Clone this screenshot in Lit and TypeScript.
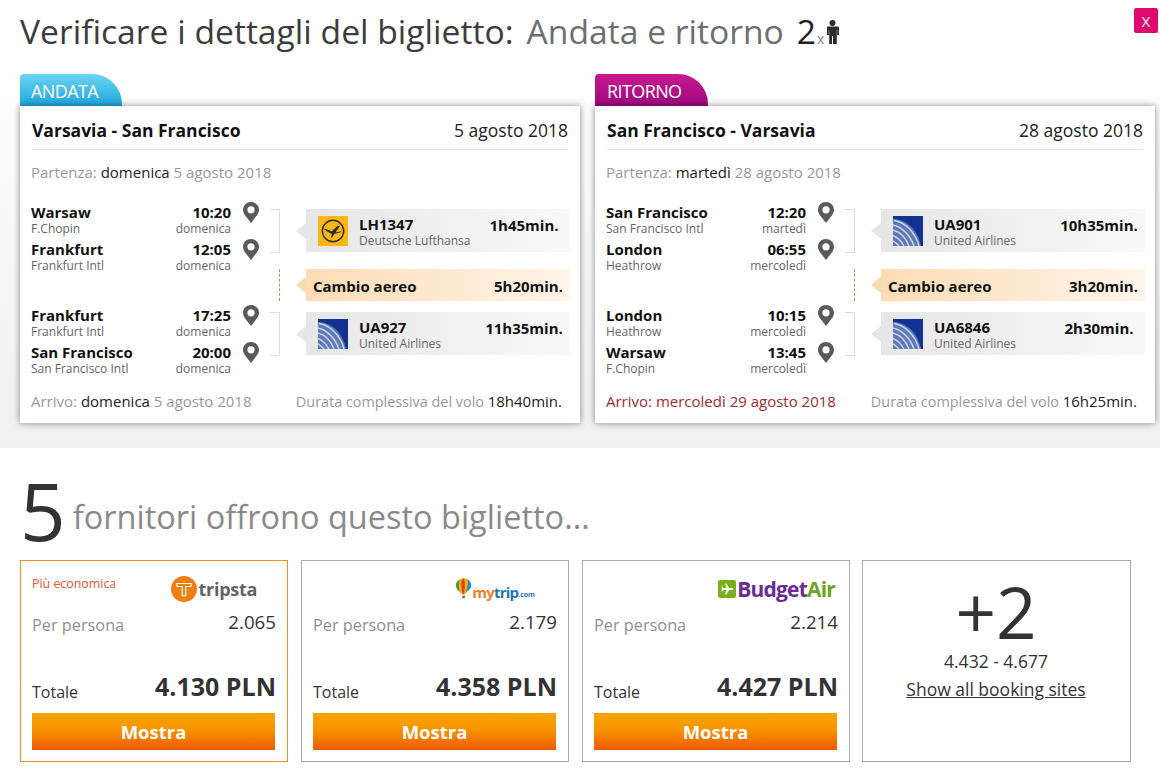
import { LitElement, html, css, svg } from "lit";
import { customElement } from "lit/decorators.js";

interface Stop { city: string; airport: string; time: string; day: string }
interface Seg { stops: Stop[]; code: string; airline: string; dur: string; logo: "lh" | "ua" }
interface Leg {
  tab: string; cls: string; route: string; date: string; depDay: string; depDate: string;
  arrDay: string; arrDate: string; arrWarn: boolean; total: string; wait: string; segs: Seg[];
}

const pin = svg`<svg class="pin" viewBox="0 0 16 21" width="16" height="21"><path fill="#5a5a5a" fill-rule="evenodd" d="M8 0C3.600 0 0 3.400 0 7.700c0 2 .7 3.300 1.600 5L8 21l6.400-8.300c.9-1.700 1.600-3 1.600-5C16 3.400 12.400 0 8 0zm0 4.200a3.600 3.600 0 1 1 0 7.200 3.600 3.600 0 0 1 0-7.200z"/></svg>`;

const lhLogo = svg`<svg class="logo" viewBox="0 0 30 30" width="30" height="30"><rect width="30" height="30" fill="#fcb714"/><circle cx="15" cy="15" r="10.700" fill="none" stroke="#2a2a33" stroke-width="1.400"/><path d="M5.500 12.500c3 .4 6 1.700 8 3l6-5.500 2.500-.3-4.500 6.800 6-1.300-.8 1-6.400 1.800-2.300 3.600-1.200-.2 1.100-3.500c-2.800-1.200-6-2.800-8.400-5.400z" fill="#2a2a33"/></svg>`;

const uaLogo = svg`<svg class="logo" viewBox="0 0 30 30" width="30" height="30"><rect width="30" height="30" fill="#13318f"/><path d="M0 3C12 3 24 12 28 30H0z" fill="#5f78b8"/><g fill="none" stroke="#c9d4ea" stroke-width="1.500"><path d="M1 4.500C11 6 22 15 26 30"/><path d="M0 9C9 11 17 19 21 30"/><path d="M0 14C7 16 13 22 16 30"/><path d="M0 19.500C4 21 8 25 11 30"/><path d="M0 25C2 26 4 28 6 30"/></g></svg>`;

const person = svg`<svg class="person" viewBox="0 0 13 24" width="13" height="24"><circle cx="6.500" cy="3" r="3" fill="#2b2b2b"/><path fill="#2b2b2b" d="M1.500 6.500h10c.8 0 1.500.6 1.500 1.400V15h-1.800v-5h-.4v14H7V16H6v8H3.200V10h-.4v5H1V7.900c0-.8 0-1.400.5-1.400z"/></svg>`;

const balloon = svg`<svg viewBox="0 0 18 24" width="16" height="22"><path d="M9 0C4 0 0 3.500 0 8c0 4 4 7 7 10h3c2-3 7-6 7-10 0-4.500-3-8-8-8z" fill="#f4b400"/><path d="M4 1.500C1 3.500 0 6 0 8c0 3 2 5 4 7 -1-4-1-9 0-13.500z" fill="#2f9e44"/><path d="M9 0C6.500 1 5.500 5 6 9c.2 3 1 6 1.500 9H9C10 13 10.500 4 9 0z" fill="#e53935"/><path d="M13 1c1 4 0 10-2 15 3-2.500 6-5 6-8 0-3-2-6-4-7z" fill="#1e88e5"/><rect x="7" y="19.500" width="3" height="3" fill="#8d6e63"/></svg>`;

const plane = svg`<svg viewBox="0 0 20 20" width="16" height="16"><path fill="#fff" d="M18 10c0-.7-.6-1.200-1.300-1.200h-4L9 3H7.500l1.900 5.800H5.200L4 7H3l.7 3L3 13h1l1.200-1.800h4.200L7.500 17H9l3.700-5.800h4c.7 0 1.300-.5 1.300-1.200z"/></svg>`;

const legs: Leg[] = [
  {
    tab: "ANDATA", cls: "out", route: "Varsavia - San Francisco", date: "5 agosto 2018",
    depDay: "domenica", depDate: "5 agosto 2018", arrDay: "domenica", arrDate: "5 agosto 2018",
    arrWarn: false, total: "18h40min.", wait: "5h20min.",
    segs: [
      { code: "LH1347", airline: "Deutsche Lufthansa", dur: "1h45min.", logo: "lh", stops: [
        { city: "Warsaw", airport: "F.Chopin", time: "10:20", day: "domenica" },
        { city: "Frankfurt", airport: "Frankfurt Intl", time: "12:05", day: "domenica" } ] },
      { code: "UA927", airline: "United Airlines", dur: "11h35min.", logo: "ua", stops: [
        { city: "Frankfurt", airport: "Frankfurt Intl", time: "17:25", day: "domenica" },
        { city: "San Francisco", airport: "San Francisco Intl", time: "20:00", day: "domenica" } ] },
    ],
  },
  {
    tab: "RITORNO", cls: "ret", route: "San Francisco - Varsavia", date: "28 agosto 2018",
    depDay: "martedì", depDate: "28 agosto 2018", arrDay: "mercoledì", arrDate: "29 agosto 2018",
    arrWarn: true, total: "16h25min.", wait: "3h20min.",
    segs: [
      { code: "UA901", airline: "United Airlines", dur: "10h35min.", logo: "ua", stops: [
        { city: "San Francisco", airport: "San Francisco Intl", time: "12:20", day: "martedì" },
        { city: "London", airport: "Heathrow", time: "06:55", day: "mercoledì" } ] },
      { code: "UA6846", airline: "United Airlines", dur: "2h30min.", logo: "ua", stops: [
        { city: "London", airport: "Heathrow", time: "10:15", day: "mercoledì" },
        { city: "Warsaw", airport: "F.Chopin", time: "13:45", day: "mercoledì" } ] },
    ],
  },
];

@customElement("app-root")
export class AppRoot extends LitElement {
  static styles = css`
    :host { display: block; position: relative; width: 1160px; height: 770px; overflow: hidden; background: #fff;
      font-family: "Open Sans", sans-serif; color: #333; }
    .top { height: 448px; box-sizing: border-box; padding: 0 5px 0 20px;
      background: linear-gradient(#fff 0, #fff 60px, #f0f0f0 100%); }
    .title { display: flex; align-items: baseline; height: 74px; padding-top: 8px; box-sizing: border-box; font-size: 33.650px; line-height: 46px; color: #3c3c3c; white-space: nowrap; }
    .title .sub { color: #6e6e6e; margin-left: 13px; }
    .title .n { color: #222; margin-left: 13px; }
    .title .x { font-size: 14px; color: #888; line-height: 14px; margin-left: 1px; }
    .person { align-self: flex-start; margin-left: 2px; margin-top: 12px; }
    .close { position: absolute; left: 1134px; top: 8px; width: 24px; height: 25px; border-radius: 2px; background: #de0a6e; color: #f9d3e4; font-size: 18px; line-height: 24px; text-align: center; }
    .legs { display: flex; gap: 15px; }
    .leg { width: 560px; }
    .tab { width: 102px; height: 32px; box-sizing: border-box; padding-left: 11px; font-size: 18px; line-height: 34px; letter-spacing: -0.6px; color: #fff; border-radius: 4px 30px 0 0; }
    .out .tab { background: linear-gradient(#6dd3f3, #1ea7de); }
    .ret .tab { width: 113px; padding-left: 12px; background: linear-gradient(#c9198f, #9c0a7c); color: #fff; }
    .card { height: 317px; box-sizing: border-box; background: #fff; box-shadow: 0 0 7px rgba(0,0,0,.45); padding: 0 12px; }
    .head { display: flex; justify-content: space-between; align-items: center; height: 44px; box-sizing: border-box; padding-top: 5px; border-bottom: 1px solid #e8e8e8; font-size: 17.500px; color: #222; }
    .head b { font-weight: 700; color: #111; }
    .dep { margin-top: 11px; font-size: 15px; line-height: 22px; color: #999; height: 44px; margin-left: -1px; }
    .dep span, .foot span { color: #222; }
    .itin { display: flex; margin-left: -1px; }
    .stops { width: 220px; flex: none; }
    .seg + .seg { margin-top: 29px; }
    .stop { display: grid; grid-template-columns: 200px 40px; height: 37px; width: 240px; }
    .stop .info { display: grid; grid-template-columns: 1fr auto; grid-auto-rows: 16px; }
    .city, .time { font-size: 15px; font-weight: 700; color: #111; line-height: 16px; margin-top: -1px; }
    .time { text-align: right; }
    .air, .day { font-size: 12px; color: #666; line-height: 16px; }
    .day { text-align: right; }
    .pin { justify-self: center; margin-top: -3px; }
    .links { margin-left: 19px; padding-top: 4px; width: 300px; flex: none; }
    .link { display: flex; height: 44px; }
    .bracket { width: 10px; height: 44px; box-sizing: border-box; border: 1px solid #ddd; border-left: none; flex: none; }
    .boxwrap { display: flex; margin-left: 16px; align-items: center; height: 43px; width: 274px; }
    .arrow { width: 0; height: 0; border: 8px solid transparent; border-left: none; border-right: 10px solid #e6e6e6; flex: none; }
    .box { width: 264px; height: 43px; box-sizing: border-box; display: flex; align-items: center; padding: 0 1px 0 12px; background: linear-gradient(90deg, #e6e6e6, #f9f9f9); }
    .logo { flex: none; margin-right: 11px; }
    .fl { flex: 1; padding-top: 3px; }
    .code { font-size: 15px; font-weight: 700; color: #111; line-height: 17px; }
    .name { font-size: 12px; color: #666; line-height: 16px; }
    .dur { width: 90px; flex: none; text-align: center; font-size: 15px; font-weight: 700; color: #111; margin-top: -11px; }
    .change { display: flex; height: 32px; margin: 16px 0 11px; }
    .dash { width: 10px; box-sizing: border-box; border-right: 1px dashed #c88a5a; flex: none; }
    .change .arrow { border-right-color: #fbd9ae; }
    .change .boxwrap { height: 32px; }
    .change .box { height: 32px; background: linear-gradient(90deg, #fddcb5, #fff5ea); padding: 1px 7px 0 7px; justify-content: space-between; font-size: 15px; font-weight: 700; color: #111; }
    .foot { display: flex; justify-content: space-between; margin-top: 8px; font-size: 15px; line-height: 22px; color: #999; margin-left: -1px; padding-right: 6px; }
    .foot .total { font-size: 14.400px; }
    .foot .total span { font-size: 15px; }
    .foot .warn, .foot .warn span { color: #a52a2a; }
    .offers { padding: 0 20px; }
    .count { display: flex; align-items: flex-start; height: 112px; }
    .count .big { font-size: 80px; line-height: 112px; margin-top: 6px; color: #333; font-weight: 400; }
    .count .txt { font-size: 32.500px; line-height: 44px; margin-top: 47px; color: #8a8a8a; margin-left: 7px; white-space: nowrap; }
    .cards { display: flex; gap: 13px; }
    .o { width: 268px; height: 202px; box-sizing: border-box; border: 1px solid #aaa; padding: 0 12px 0 11px; display: flex; flex-direction: column; }
    .o.best { border-color: #ee8c2a; }
    .o .r1 { height: 44px; display: flex; justify-content: space-between; }
    .cheap { font-size: 12.400px; color: #e2572b; line-height: 16px; margin-top: 15px; white-space: nowrap; }
    .lg { flex: none; }
    .r2 { display: flex; justify-content: space-between; height: 66px; font-size: 16.300px; color: #8f8f8f; margin-right: -1px; }
    .r2 span:first-child { margin-top: 8px; line-height: 24px; }
    .r2 span:last-child { font-size: 18.700px; color: #333; margin-top: 4px; line-height: 26px; }
    .r3 { display: flex; justify-content: space-between; height: 42px; font-size: 16px; color: #333; }
    .r3 span:first-child { margin-top: 9px; line-height: 24px; }
    .r3 b { font-size: 25px; line-height: 30px; font-weight: 700; color: #333; margin-right: -1px; }
    .btn { height: 37px; background: linear-gradient(#f9a400 0, #f79400 45%, #ee5a02 100%); color: #fff; text-align: center; font-weight: 700; font-size: 18.500px; line-height: 38px; }
    .o.more { width: 269px; margin-left: -1px; border-color: #aaa; align-items: center; text-align: center; }
    .plus { font-size: 71px; line-height: 72px; color: #333; margin-top: 15px; }
    .range { font-size: 17.500px; color: #333; line-height: 22px; margin-top: 2px; }
    .all { font-size: 17.500px; color: #333; text-decoration: underline; line-height: 28px; margin-top: 3px; }
    .tripsta { display: flex; align-items: center; gap: 2px; margin: 14px 18px 0 0; font: 700 18px/28px "Open Sans", sans-serif; color: #5e6468; letter-spacing: -0.3px; }
    .mytrip { display: flex; align-items: flex-end; margin: 17px 21px 0 0; font: 700 15px/16px "Open Sans", sans-serif; color: #ef7d22; letter-spacing: -0.8px; }
    .mytrip i { font-style: normal; color: #1e78b4; }
    .mytrip small { font-size: 7px; color: #1e78b4; line-height: 10px; letter-spacing: 0; }
    .budget { display: flex; align-items: center; gap: 1px; margin: 14px 2px 0 0; font: 700 21px/28px "Open Sans", sans-serif; color: #6a2c91; letter-spacing: -0.8px; }
    .budget i { font-style: normal; color: #6ea51e; }
    .bsq { width: 18px; height: 18px; border-radius: 2px; background: #7ab01f; display: flex; align-items: center; justify-content: center; }
  `;

  private seg(s: Seg) {
    return html`<div class="seg">${s.stops.map(st => html`
      <div class="stop">
        <div class="info">
          <div class="city">${st.city}</div><div class="time">${st.time}</div>
          <div class="air">${st.airport}</div><div class="day">${st.day}</div>
        </div>
        ${pin}
      </div>`)}</div>`;
  }

  private link(s: Seg) {
    return html`<div class="link"><div class="bracket"></div><div class="boxwrap"><div class="arrow"></div>
      <div class="box">${s.logo === "lh" ? lhLogo : uaLogo}
        <div class="fl"><div class="code">${s.code}</div><div class="name">${s.airline}</div></div>
        <div class="dur">${s.dur}</div></div></div></div>`;
  }

  private leg(l: Leg) {
    return html`<section class="leg ${l.cls}">
      <div class="tab">${l.tab}</div>
      <div class="card">
        <div class="head"><b>${l.route}</b><div>${l.date}</div></div>
        <div class="dep">Partenza: <span>${l.depDay}</span> ${l.depDate}</div>
        <div class="itin">
          <div class="stops">${l.segs.map(s => this.seg(s))}</div>
          <div class="links">
            ${this.link(l.segs[0])}
            <div class="change"><div class="dash"></div><div class="boxwrap"><div class="arrow"></div><div class="box"><span>Cambio aereo</span><span>${l.wait}</span></div></div></div>
            ${this.link(l.segs[1])}
          </div>
        </div>
        <div class="foot">
          <div class=${l.arrWarn ? "warn" : ""}>Arrivo: <span>${l.arrDay}</span> ${l.arrDate}</div>
          <div class="total">Durata complessiva del volo <span>${l.total}</span></div>
        </div>
      </div>
    </section>`;
  }

  private offer(cls: string, cheap: string, logo: unknown, per: string, tot: string) {
    return html`<div class="o ${cls}">
      <div class="r1"><div class="cheap">${cheap}</div><div class="lg">${logo}</div></div>
      <div class="r2"><span>Per persona</span><span>${per}</span></div>
      <div class="r3"><span>Totale</span><b>${tot}</b></div>
      <div class="btn">Mostra</div>
    </div>`;
  }

  render() {
    const tripsta = html`<div class="tripsta"><svg viewBox="0 0 26 26" width="26" height="26"><circle cx="13" cy="13" r="13" fill="#f07f13"/><path d="M6 7.500h14v3h-5.300V20h-3.400v-9.500H6z" fill="none" stroke="#fff" stroke-width="1.200"/></svg>tripsta</div>`;
    const mytrip = html`<div class="mytrip">${balloon}<span>my<i>trip</i></span><small>.com</small></div>`;
    const budget = html`<div class="budget"><div class="bsq">${plane}</div><span>Budget<i>Air</i></span></div>`;
    return html`
      <div class="top">
        <div class="title">
          <span>Verificare i dettagli del biglietto:</span><span class="sub">Andata e ritorno</span>
          <span class="n">2</span><span class="x">x</span>${person}
        </div>
        <div class="close">x</div>
        <div class="legs">${legs.map(l => this.leg(l))}</div>
      </div>
      <div class="offers">
        <div class="count"><span class="big">5</span><span class="txt">fornitori offrono questo biglietto...</span></div>
        <div class="cards">
          ${this.offer("best", "Più economica", tripsta, "2.065", "4.130 PLN")}
          ${this.offer("", "", mytrip, "2.179", "4.358 PLN")}
          ${this.offer("", "", budget, "2.214", "4.427 PLN")}
          <div class="o more">
            <div class="plus">+2</div>
            <div class="range">4.432 - 4.677</div>
            <div class="all">Show all booking sites</div>
          </div>
        </div>
      </div>`;
  }
}
